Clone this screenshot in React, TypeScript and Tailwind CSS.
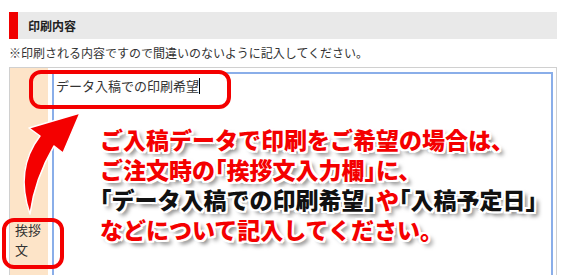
import React from 'react';

const jp = { fontFamily: '"Noto Sans CJK JP", "Noto Sans", sans-serif' };

// outline + drop shadow for the big annotation text
const callout =
  '[text-shadow:2px_0_0_#fff,-2px_0_0_#fff,0_2px_0_#fff,0_-2px_0_#fff,2px_2px_0_#fff,-2px_-2px_0_#fff,2px_-2px_0_#fff,-2px_2px_0_#fff,4px_4px_4px_rgba(0,0,0,0.55)]';

const Open: React.FC = () => <span className="-ml-[0.5em]">「</span>;
const Close: React.FC = () => <span className="-mr-[0.5em]">」</span>;

const Arrow: React.FC = () => (
  <svg className="absolute left-0 top-0 pointer-events-none" width="120" height="230" viewBox="0 0 120 230">
    <path
      d="M80,113 L29,128 L40,136 C27,153 17,177 30,214 C33,192 40,170 54,146 L63,153 Z"
      fill="#f40000"
      stroke="#fff"
      strokeWidth="1.5"
      strokeLinejoin="round"
    />
  </svg>
);

const App: React.FC = () => {
  return (
    <div className="relative w-[570px] h-[275px] overflow-hidden bg-white text-[#333]" style={jp}>
      <div className="pt-3 pl-[9px] pr-[13px]">
        {/* section heading */}
        <div className="flex h-[27px] bg-[#e9e9e9]">
          <div className="w-[9px] bg-[#f00000]" />
          <h2 className="flex items-center pl-[10px] text-[12px] font-bold text-[#222]">印刷内容</h2>
        </div>

        <p className="mt-[5px] text-[12px] leading-[18px] text-[#333]">
          ※印刷される内容ですので間違いのないように記入してください。
        </p>

        {/* form table */}
        <div className="mt-[5px] flex border border-[#d0d0d0]">
          <div className="w-[38px] shrink-0 bg-[#fde4c8] pl-[5px] flex items-center">
            <span className="text-[13px] leading-[20px] text-[#333]">挨拶文</span>
          </div>
          <div className="flex-1 pt-1 pb-1 pl-[4px] pr-[3px]">
            <div className="h-[335px] border-2 border-[#8aaee9] pl-[2px] pt-[3px] text-[13px] leading-[18px] text-[#333]">
              データ入稿での印刷希望
              <span className="inline-block w-px h-[16px] bg-black align-[-3px]" />
            </div>
          </div>
        </div>
      </div>

      {/* annotations */}
      <div className="absolute left-[29px] top-[70px] w-[202px] h-[39px] rounded-[12px] border-4 border-[#f40000]" />
      <div className="absolute left-[2px] top-[218px] w-[62px] h-[51px] rounded-[12px] border-4 border-[#f40000]" />
      <Arrow />

      <div className={`absolute left-[100px] top-[124px] text-[23px] leading-[30px] font-black whitespace-nowrap ${callout}`}>
        <div className="text-[#f40000]">ご入稿データで印刷をご希望の場合は、</div>
        <div className="text-[#f40000]">
          ご注文時の<Open />挨拶文入力欄<Close />に、
        </div>
        <div className="text-[#111]">
          <Open />データ入稿での印刷希望<Close />
          <span className="text-[#f40000]">や</span>
          <Open />入稿予定日<Close />
        </div>
        <div className="text-[#f40000]">などについて記入してください。</div>
      </div>
    </div>
  );
};

export default App;
